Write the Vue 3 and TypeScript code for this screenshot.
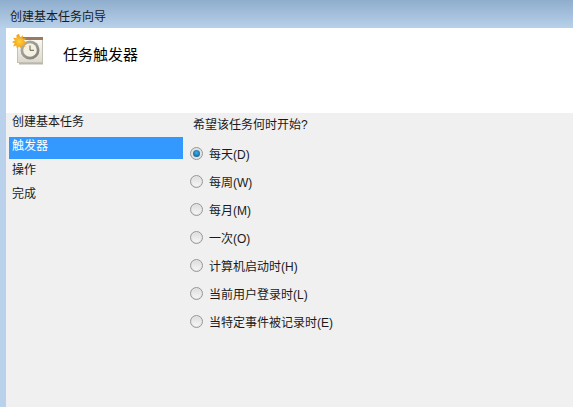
<script setup lang="ts">
const steps: { label: string; active?: boolean }[] = [
  { label: '创建基本任务' },
  { label: '触发器', active: true },
  { label: '操作' },
  { label: '完成' },
]
const options: { label: string; checked?: boolean }[] = [
  { label: '每天(D)', checked: true },
  { label: '每周(W)' },
  { label: '每月(M)' },
  { label: '一次(O)' },
  { label: '计算机启动时(H)' },
  { label: '当前用户登录时(L)' },
  { label: '当特定事件被记录时(E)' },
]
</script>

<template>
  <div class="window">
    <div class="titlebar">创建基本任务向导</div>
    <div class="frame">
      <header class="head">
        <svg class="icon" width="34" height="34" viewBox="0 0 34 34">
          <defs>
            <radialGradient id="sun" cx="50%" cy="50%" r="50%">
              <stop offset="0%" stop-color="#ffd23c" />
              <stop offset="100%" stop-color="#f09a12" />
            </radialGradient>
            <linearGradient id="page" x1="0" y1="0" x2="0" y2="1">
              <stop offset="0%" stop-color="#fbfaf6" />
              <stop offset="100%" stop-color="#dcd8cc" />
            </linearGradient>
            <linearGradient id="dial" x1="0" y1="0" x2="1" y2="1">
              <stop offset="0%" stop-color="#b4b3ae" />
              <stop offset="100%" stop-color="#7d7b75" />
            </linearGradient>
          </defs>
          <rect x="5.500" y="4.500" width="25" height="24" fill="url(#page)" stroke="#c4c0b4" />
          <rect x="5" y="3" width="26" height="3" fill="#9a7a62" />
          <path d="M7 29h24v1.500H7z" fill="#b9b6ac" />
          <circle cx="18" cy="16" r="9.500" fill="url(#dial)" />
          <circle cx="18" cy="16" r="6.800" fill="#f6f1df" />
          <path d="M18 11.500v4.800h4" fill="none" stroke="#5c5c58" stroke-width="1" />
          <path
            d="M7 0l1.400 3.400L11 1l-.3 3.600 3.600-.4-2.300 2.800 3 1.500-3.200 1.200 1.800 3-3.500-.8-.4 3.100-2.600-2.600L4.700 14l-.4-2.500L1 12.500l1.800-3L0 8l3-1.400L1 3.800l3.500.4L4.500 1z"
            fill="url(#sun)"
          />
        </svg>
        <h1 class="heading">任务触发器</h1>
      </header>
      <div class="body">
        <nav class="steps">
          <div v-for="s in steps" :key="s.label" class="step" :class="{ active: s.active }">{{ s.label }}</div>
        </nav>
        <section class="content">
          <p class="question">希望该任务何时开始?</p>
          <div class="options">
            <label v-for="o in options" :key="o.label" class="option">
              <span class="radio" :class="{ checked: o.checked }"></span>
              <span>{{ o.label }}</span>
            </label>
          </div>
        </section>
      </div>
    </div>
  </div>
</template>

<style>
html, body { margin: 0; padding: 0; background: #b9d1ea; overflow: hidden; }
</style>

<style scoped>
.window {
  width: 573px;
  height: 407px;
  display: flex;
  flex-direction: column;
  font-family: "Liberation Sans", "Noto Sans CJK SC", sans-serif;
  font-size: 12px;
  color: #1a1a1a;
  background: #b9d1ea;
  overflow: hidden;
}
.titlebar {
  height: 28px;
  flex: none;
  box-sizing: border-box;
  padding: 9px 0 0 10px;
  line-height: 16px;
  background: linear-gradient(#8fadcd, #b9d1ea);
}
.frame {
  flex: 1;
  margin-left: 6px;
  display: flex;
  flex-direction: column;
  min-height: 0;
}
.head {
  height: 85px;
  flex: none;
  background: #fff;
  display: flex;
  align-items: flex-start;
  box-sizing: border-box;
  padding: 6px 0 0 6px;
}
.icon { flex: none; }
.heading {
  margin: 11px 0 0 17px;
  font-size: 15px;
  font-weight: 400;
  line-height: 20px;
  color: #000;
}
.body {
  flex: 1;
  display: flex;
  background: #f0f0f0;
  min-height: 0;
}
.steps {
  width: 174px;
  margin-left: 3px;
  flex: none;
}
.step {
  height: 22px;
  line-height: 18px;
  margin-bottom: 2px;
  padding-left: 3px;
}
.step.active {
  background: #3399ff;
  color: #fff;
}
.content {
  flex: 1;
  padding: 0 0 0 10px;
}
.question {
  margin: 4px 0 0;
  line-height: 16px;
}
.options {
  margin-top: 6px;
  margin-left: -3px;
}
.option {
  display: flex;
  align-items: center;
  height: 28px;
  gap: 6px;
}
.radio {
  width: 11px;
  height: 11px;
  flex: none;
  border: 1px solid #979797;
  border-radius: 50%;
  background: linear-gradient(#dcdcdc, #f8f8f8);
  box-shadow: inset 0 0 0 1px #e4e4e4;
  position: relative;
}
.radio.checked {
  background: #e2e2e2;
}
.radio.checked::after {
  content: "";
  position: absolute;
  left: 2px;
  top: 2px;
  width: 7px;
  height: 7px;
  border-radius: 50%;
  background: radial-gradient(circle at 50% 40%, #38b0e8, #0d4f80);
}
</style>
